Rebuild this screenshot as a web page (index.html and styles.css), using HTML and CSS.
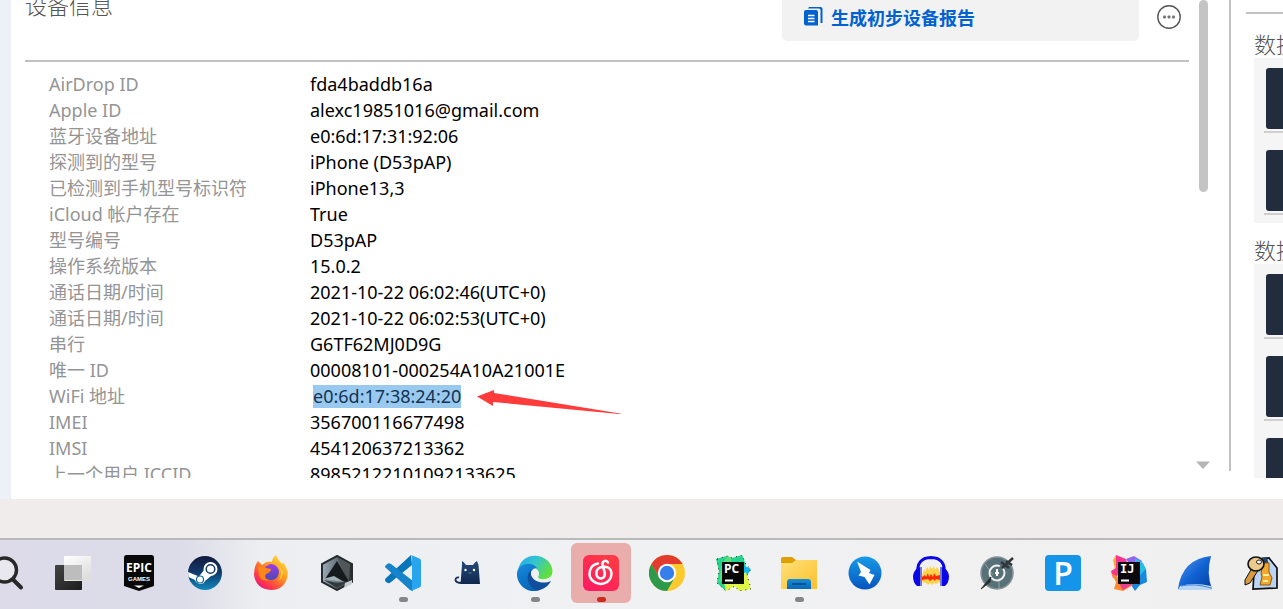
FILE: index.html
```html
<!DOCTYPE html>
<html lang="zh-CN">
<head>
<meta charset="utf-8">
<title>设备信息</title>
<link rel="stylesheet" href="styles.css">
</head>
<body>
<div class="app">
  <div class="edge"></div>
  <main class="device">
    <header class="device-head">
      <h1>设备信息</h1>
      <button class="report" type="button">
        <svg width="19" height="19" viewBox="0 0 19 19" aria-hidden="true"><path d="M5 0H16.500Q18.500 0 18.500 2V16H16.500V3Q16.500 1.500 15 1.500H4Z" fill="#0062d1"/><path d="M2 3H12Q14 3 14 5V18.500H2Q0 18.500 0 16.500V5Q0 3 2 3Z" fill="#0062d1"/><path d="M4 8.500H10.500M4 11.500H10.500M4 14.500H10.500" stroke="#fff" stroke-width="1.300"/></svg>
        <span>生成初步设备报告</span>
      </button>
      <button class="more" type="button" aria-label="更多">
        <svg width="24" height="24" viewBox="0 0 24 24" aria-hidden="true"><circle cx="12" cy="12" r="11.200" fill="#fff" stroke="#555" stroke-width="1.400"/><g fill="#777"><rect x="6" y="10.500" width="3" height="3" rx="1"/><rect x="10.500" y="10.500" width="3" height="3" rx="1"/><rect x="15" y="10.500" width="3" height="3" rx="1"/></g></svg>
      </button>
    </header>
    <div class="details">
      <table>
        <tr><th scope="row">AirDrop ID</th><td>fda4baddb16a</td></tr>
        <tr><th scope="row">Apple ID</th><td>alexc19851016@gmail.com</td></tr>
        <tr><th scope="row">蓝牙设备地址</th><td>e0:6d:17:31:92:06</td></tr>
        <tr><th scope="row">探测到的型号</th><td>iPhone (D53pAP)</td></tr>
        <tr><th scope="row">已检测到手机型号标识符</th><td>iPhone13,3</td></tr>
        <tr><th scope="row">iCloud 帐户存在</th><td>True</td></tr>
        <tr><th scope="row">型号编号</th><td>D53pAP</td></tr>
        <tr><th scope="row">操作系统版本</th><td>15.0.2</td></tr>
        <tr><th scope="row">通话日期/时间</th><td>2021-10-22 06:02:46(UTC+0)</td></tr>
        <tr><th scope="row">通话日期/时间</th><td>2021-10-22 06:02:53(UTC+0)</td></tr>
        <tr><th scope="row">串行</th><td>G6TF62MJ0D9G</td></tr>
        <tr><th scope="row">唯一 ID</th><td>00008101-000254A10A21001E</td></tr>
        <tr><th scope="row">WiFi 地址</th><td><div class="picked"><mark>e0:6d:17:38:24:20</mark><svg width="146" height="26" viewBox="0 0 146 26" aria-hidden="true"><path d="M0 8.500 17 2V5L143 25.500Q145 26 142 26L16 14V18Z" fill="#ff3b3b"/></svg></div></td></tr>
        <tr><th scope="row">IMEI</th><td>356700116677498</td></tr>
        <tr><th scope="row">IMSI</th><td>454120637213362</td></tr>
        <tr><th scope="row">上一个用户 ICCID</th><td>89852122101092133625</td></tr>
      </table>
    </div>
  </main>
  <div class="scroll" aria-hidden="true"><div class="thumb"></div><svg width="14" height="8" viewBox="0 0 14 8"><path d="M0 0.500H14L7 8Z" fill="#b5b5b5"/></svg></div>
  <aside class="side">
    <section><h2>数据</h2><ul><li><div class="card"></div></li><li><div class="card"></div></li></ul></section>
    <section><h2>数据</h2><ul><li><div class="card"></div></li><li><div class="card"></div></li><li><div class="card"></div></li></ul></section>
  </aside>
</div>

<nav class="taskbar" aria-label="任务栏">
  <button type="button" aria-label="搜索"><svg viewBox="0 0 36 36"><circle cx="15.500" cy="15" r="12" fill="#e9e8ee" stroke="#282828" stroke-width="3.400"/><path d="M24 24.500 32 32.500" stroke="#282828" stroke-width="4" stroke-linecap="round"/></svg></button>
  <button type="button" aria-label="任务视图"><svg viewBox="0 0 36 36"><defs><linearGradient id="tv" x2="1" y2="1"><stop stop-color="#454545"/><stop offset="1" stop-color="#1c1c1c"/></linearGradient><linearGradient id="tw" x2="0.600" y2="1"><stop stop-color="#fff"/><stop offset="1" stop-color="#dededf"/></linearGradient></defs><rect y="10" width="27" height="25" rx="1" fill="url(#tv)"/><rect x="9" y="1" width="27" height="25" rx="1" fill="url(#tw)"/><path d="M9 10H27V25H9Z" fill="#bdbdbe"/></svg></button>
  <button type="button" aria-label="Epic Games"><svg viewBox="0 0 36 36"><path d="M5 0H31Q33 0 33 2.500V31L18 36 3 31V2.500Q3 0 5 0Z" fill="#080808"/><text x="18" y="17" class="epic">EPIC</text><text x="18" y="26" class="games">GAMES</text><path d="M13 30.500H23L18 33Z" fill="#fff"/></svg></button>
  <button type="button" aria-label="Steam"><svg viewBox="0 0 36 36"><defs><linearGradient id="st" x2="0" y2="1"><stop stop-color="#14183d"/><stop offset="0.500" stop-color="#103c6c"/><stop offset="1" stop-color="#1288bd"/></linearGradient></defs><circle cx="18" cy="18" r="17" fill="url(#st)"/><path d="M1 17 12 21.500 17 15 24 21 18 26Q17 29 13 29 9 28 8 25L1.500 22Z" fill="#fff"/><circle cx="23.500" cy="14" r="7" fill="#fff"/><circle cx="23.500" cy="14" r="4.300" fill="none" stroke="#153e6c" stroke-width="1.500"/><circle cx="13" cy="24.500" r="3.500" fill="none" stroke="#17669b" stroke-width="1.200"/></svg></button>
  <button type="button" aria-label="Firefox"><svg viewBox="0 0 36 36"><defs><linearGradient id="ff" x1="1" x2="0.200" y2="1"><stop stop-color="#fff44f"/><stop offset="0.450" stop-color="#ff9b1e"/><stop offset="0.800" stop-color="#ff3847"/><stop offset="1" stop-color="#e31587"/></linearGradient><linearGradient id="fp" x2="0" y2="1"><stop stop-color="#a13be9"/><stop offset="1" stop-color="#494ab5"/></linearGradient></defs><path d="M5 6 9 10Q14 5 19 7 19 3 23 0 25 5 29 9L30 7Q36 15 34.500 22 31 35 18 35 3 34 1 20 1 11 5 6Z" fill="url(#ff)"/><path d="M17 9Q25 9 26 17 25 25 18 25 11 25 11 18L12 12Z" fill="url(#fp)"/><path d="M5 12Q11 10 13 13L18 14Q18 17 13 19 10 24 16 25 9 27 6 21Z" fill="#ff861b"/><path d="M26 12Q31 19 25 26 29 24 30 17Z" fill="#ffd93b"/></svg></button>
  <button type="button" aria-label="立方体"><svg viewBox="0 0 36 36"><defs><linearGradient id="cu" x2="1"><stop stop-color="#9cacb7"/><stop offset="0.500" stop-color="#65727b"/><stop offset="1" stop-color="#272b2e"/></linearGradient></defs><path d="M18 1 33 9V27L18 35 3 27V9Z" fill="url(#cu)" stroke="#262b2e" stroke-width="2"/><path d="M18 2 31 9 30 26Z" fill="#50575b"/><path d="M18 6 30 27 6 24Z" fill="#171a1d"/><path d="M5 25 18 28 28 27 18 33Z" fill="#31383c"/><path d="M4 24 15 21 25 27Z" fill="#a5b1b8"/><path d="M26 28 33 25V29L25 33Z" fill="#c8cbcd"/></svg></button>
  <button class="open" type="button" aria-label="Visual Studio Code"><svg viewBox="0 0 36 36"><path d="M26 0 1 23Q-1 25 1 27L3 28Q4 29 6 27L27 10Z" fill="#0875b9"/><path d="M1 10 3 8.500Q4 8 6 9L28 26V36L25 35 1 13Q-1 12 1 10Z" fill="#1683cb"/><path d="M26 0 34.500 3.500Q36 4 36 6V30Q36 32 34.500 32.500L26 36Q27 35 27 33V3Q27 1 26 0Z" fill="#29a4ef"/></svg></button>
  <button type="button" aria-label="Clash"><svg viewBox="0 0 36 36"><defs><linearGradient id="ct" x2="0" y2="1"><stop stop-color="#244a79"/><stop offset="1" stop-color="#11284e"/></linearGradient></defs><path d="M11 6Q13 7 15 10H22Q24 7 26 6L27.500 10 29 29H9.500L11 10Z" fill="url(#ct)"/><path d="M11 28Q5 28 4.500 25 4.500 22 8 22.500" fill="none" stroke="#142d55" stroke-width="1.800"/><circle cx="14.500" cy="15" r="1.200" fill="#fff"/><circle cx="23" cy="15" r="1.200" fill="#fff"/><path d="M18 17.500 19 18.500 20 17.500" stroke="#8fa6c1" fill="none"/></svg></button>
  <button class="open" type="button" aria-label="Microsoft Edge"><svg viewBox="0 0 36 36"><defs><linearGradient id="eg" x2="1" y2="0.500"><stop stop-color="#21a9e9"/><stop offset="0.500" stop-color="#33c5d0"/><stop offset="1" stop-color="#61df3d"/></linearGradient><linearGradient id="eb" x2="0.500" y2="1"><stop stop-color="#168be1"/><stop offset="1" stop-color="#0865b5"/></linearGradient></defs><path d="M1 15C4-1 22-3 31 6 36 11 37 19 33 22 29 25 22 25 21 22 23 19 22 15 18 13 12 8 3 11 1 15Z" fill="url(#eg)"/><path d="M0 18C1 9 14 5 20 13 15 13 13 18 13 22L23 35C9 40-1 28 0 18Z" fill="url(#eb)"/><path d="M14 15C8 20 10 32 20 35.500 27 35 32 30 34 26 27 29 17 28 14 20Z" fill="#104f9b"/></svg></button>
  <button class="open active" type="button" aria-label="网易云音乐"><svg viewBox="0 0 36 36"><defs><linearGradient id="ne" x1="0" y1="1" x2="0.600" y2="0"><stop stop-color="#ff1764"/><stop offset="1" stop-color="#ff3945"/></linearGradient></defs><rect width="36" height="36" rx="6" fill="url(#ne)"/><path d="M15 8.500C6 10 4 21 10 26 17 32 28 28 28.500 19 28.500 12 22 10.500 17 12.500 12 15 12 23 18 23.500 23 23 22 18 21 15L19.500 9.500C19 6 23 4.500 25 7.500" fill="none" stroke="#fff" stroke-width="2.500" stroke-linecap="round"/></svg></button>
  <button type="button" aria-label="Google Chrome"><svg viewBox="0 0 36 36"><circle cx="18" cy="18" r="18" fill="#fdca2d"/><path d="M2.400 9A18 18 0 0 1 33.600 9H18L10.200 22.500Z" fill="#e33b2e"/><path d="M2.400 9A18 18 0 0 0 18 36L25.800 22.500 10.200 22.500Z" fill="#2c994b"/><circle cx="18" cy="18" r="9.200" fill="#fff"/><circle cx="18" cy="18" r="7.200" fill="#367eeb"/></svg></button>
  <button type="button" aria-label="PyCharm"><svg viewBox="0 0 36 36"><path d="M1 4 12 1 17 3 27 0 31 10 20 24 10 35 2 28 4 16Z" fill="#23d58a"/><path d="M12 1 17 3 12 20 4 28 6 12Z" fill="#57df7a"/><path d="M28 10 36 14 31 22H24Z" fill="#12b8e8"/><path d="M31 17 36 34 24 36 20 31 11 36 9 28 20 24Z" fill="#e0f447"/><path d="M2 4 12 1 17 3 27 0 31 10 36 14 32 20 36 34 24 36 20 31 11 36 2 28 4 16Z" fill="none" stroke="#172d24" stroke-dasharray="1 4"/><rect x="7" y="7" width="22" height="22" fill="#060806"/><text x="9" y="18" class="ide">PC</text><path d="M10 25.500H18" stroke="#fff" stroke-width="2"/></svg></button>
  <button class="open" type="button" aria-label="文件资源管理器"><svg viewBox="0 0 36 36"><defs><linearGradient id="fo" x2="1" y2="1"><stop stop-color="#ffe17a"/><stop offset="1" stop-color="#fbc02c"/></linearGradient><linearGradient id="fb" x2="0" y2="1"><stop stop-color="#198dd7"/><stop offset="1" stop-color="#0869b8"/></linearGradient></defs><path d="M0 4Q0 2 2 2H11L15 5H34Q36 5 36 7V16H0Z" fill="#dda000"/><path d="M0 8H11L15 5H36V34H0Z" fill="url(#fo)"/><path d="M6 34V27Q6 24 9 24H27Q30 24 30 27V34Z" fill="url(#fb)"/><path d="M11 29H25" stroke="#064f91" stroke-width="1.800"/></svg></button>
  <button type="button" aria-label="迅雷"><svg viewBox="0 0 36 36"><defs><linearGradient id="bo" x2="0" y2="1"><stop stop-color="#179be8"/><stop offset="1" stop-color="#0754bd"/></linearGradient></defs><circle cx="18" cy="18" r="16.500" fill="url(#bo)"/><path d="M10 6.500 23.500 15 22 18 27.500 20 22.500 29.500 17.500 22 11.500 20.500 14 17Z" fill="#fff"/></svg></button>
  <button type="button" aria-label="Audacity"><svg viewBox="0 0 36 36"><path d="M5 19Q3 3 18 2.500 33 3 31 19" fill="none" stroke="#0906e8" stroke-width="3"/><path d="M9 21 11 14 12 17 14 12 16 15 17 11 19 14 21 11 22 15 24 12 27 17V27L23 29 21 28 19 30 17 28 15 30 13 28 9 27Z" fill="#ffd24b"/><path d="M9 22 12 20 13 22 15 18 16 22 18 19 20 22 21 18 23 21 27 20V25L23 24 22 26 20 24 17 26 15 24 9 25Z" fill="#ff2905"/><path d="M7 12V31H4Q0 28 0 21 1 14 7 12ZM29 12V31H32Q36 28 36 21 35 14 29 12Z" fill="#0906e8"/><path d="M8 12V31M28 12V31" stroke="#777ac8" stroke-width="2"/></svg></button>
  <button type="button" aria-label="密钥工具"><svg viewBox="0 0 36 36"><circle cx="18" cy="18" r="16" fill="#587078" stroke="#859397" stroke-width="1.500"/><path d="M6 9 14 20M20 23 20 34" stroke="#91a1a5"/><circle cx="18" cy="18" r="7.500" fill="none" stroke="#edf1f2" stroke-width="2" stroke-dasharray="38 4"/><path d="M18 14V21M16 18H20" stroke="#fff" stroke-width="2"/><path d="M2 34 12 22 11 27Z" fill="#292e31" stroke="#292e31"/><path d="M23 13 34 3M22 7 30 13M27 6 33 10" stroke="#30363a" stroke-width="2.500"/></svg></button>
  <button type="button" aria-label="P"><svg viewBox="0 0 36 36"><rect width="36" height="36" rx="4" fill="#1595ea"/><text x="18" y="30" class="big">P</text></svg></button>
  <button type="button" aria-label="IntelliJ IDEA"><svg viewBox="0 0 36 36"><path d="M2 5 5 0 11 5 4 15Z" fill="#ffac33"/><path d="M5 0 15 4 18 14 2 23 0 16 5 13Z" fill="#f4368e"/><path d="M15 4 23 1 31 6 24 18Z" fill="#9067e9"/><path d="M24 3 32 8 35 14 34 28 24 25Z" fill="#24bde8"/><path d="M35 14 36 27 29 30 24 36 20 30Z" fill="#1688df"/><path d="M0 18 14 26 22 30 12 36 3 34 5 27Z" fill="#ff8a2d"/><path d="M7 27 22 29 12 35Z" fill="#ed408c"/><rect x="7" y="7" width="22" height="22" fill="#0b080e"/><text x="9" y="18" class="ide mono">IJ</text><path d="M10 25.500H18" stroke="#fff" stroke-width="2"/></svg></button>
  <button type="button" aria-label="Wireshark"><svg viewBox="0 0 36 36"><defs><linearGradient id="ws" x2="1" y2="1"><stop stop-color="#549aec"/><stop offset="0.500" stop-color="#1263d4"/><stop offset="1" stop-color="#063f9e"/></linearGradient></defs><path d="M1 34Q5 4 34 1 29 19 35 34Z" fill="url(#ws)"/><path d="M3 31Q17 27 34 31L35 35H1Z" fill="#b7d5f5"/><path d="M4 31Q18 28 34 33" fill="none" stroke="#4a86d5"/></svg></button>
  <button type="button" aria-label="密钥管理"><svg viewBox="0 0 36 36"><path d="M14 4 26 3 34 13V33L10 34 11 17Z" fill="#b9d4f6" stroke="#111" stroke-width="1.700"/><path d="M17 3 24 2 26 12 19 13Z" fill="#263f68"/><path d="M20 8H26V17L29 23 27 30H17L19 22 18 18Z" fill="#f3a82d" stroke="#8a5a0a"/><path d="M20 20H26M20 26H25" stroke="#fff0a1" stroke-width="2"/><path d="M9 13 2 25V30L7 28 16 14Z" fill="#d99b40" stroke="#111"/><ellipse cx="13" cy="9" rx="8" ry="7" fill="#edca8b" stroke="#111" stroke-width="1.600"/><ellipse cx="16" cy="7" rx="2.500" ry="2" fill="#fff" stroke="#222"/></svg></button>
</nav>
</body>
</html>
```
FILE: styles.css
```css
* { box-sizing: border-box; }

body {
  margin: 0;
  height: 100vh;
  display: flex;
  flex-direction: column;
  overflow: hidden;
  background: #f0eceb;
  font-family: "Noto Sans", "Noto Sans CJK SC", sans-serif;
  font-size: 18px;
}

button {
  border: 0;
  padding: 0;
  background: none;
  font: inherit;
}

svg { display: block; flex: none; }

h1, h2 {
  margin: 0;
  color: #555;
  font-family: "Noto Sans CJK SC", sans-serif;
  font-size: 22px;
  font-weight: 300;
  white-space: nowrap;
}

.app {
  flex: 1;
  min-height: 0;
  display: flex;
  margin-bottom: 39px;
  background: #fff;
}

.edge { width: 11px; background: #edf0f6; }

.device {
  flex: 1;
  min-width: 0;
  display: flex;
  flex-direction: column;
  margin: 0 10px 21px 14px;
}

.device-head {
  display: flex;
  align-items: flex-start;
  gap: 18px;
  padding: 0 8px 19px 0;
  border-bottom: 2px solid #c1c1c1;
}

h1 { margin-right: auto; line-height: 8px; }

.report {
  width: 357px;
  height: 41px;
  display: flex;
  align-items: center;
  gap: 8px;
  padding: 0 22px 8px;
  border-radius: 0 0 5px 5px;
  background: #f2f2f2;
  color: #0062d1;
  font-weight: 700;
}

.more { margin-top: 5px; }

.details {
  flex: 1;
  min-height: 0;
  overflow: hidden;
  padding: 9px 0 0 24px;
}

table { border-collapse: collapse; white-space: nowrap; }

th, td {
  height: 26px;
  padding: 0;
  line-height: 26px;
  text-align: left;
  font-weight: 400;
}

th { min-width: 261px; color: #949494; }
td { color: #000; }

.picked {
  height: 26px;
  display: flex;
  align-items: center;
  gap: 16px;
  padding-left: 3px;
}

mark {
  background: #99c9ef;
  color: #123453;
  line-height: 23px;
}

.picked svg { align-self: flex-start; margin: 5px 0 -5px; }

.scroll {
  width: 32px;
  display: flex;
  flex-direction: column;
  justify-content: space-between;
  margin-bottom: 28px;
  border-right: 2px solid #c1c1c1;
}

.thumb {
  width: 9px;
  height: 192px;
  border-radius: 5px;
  background: #c4c4c4;
}

.scroll svg { margin: 0 0 2px -3px; }

.side {
  width: 52px;
  overflow: hidden;
  margin-bottom: 21px;
  padding: 12px 0 0 15px;
}

.side::before {
  content: "";
  display: block;
  height: 2px;
  margin-bottom: 14px;
  background: #c1c1c1;
}

section { margin: 0 0 11px 8px; }

h2 { line-height: 30px; overflow: hidden; }

ul {
  margin: 0;
  padding: 10px 0 8px 10px;
  list-style: none;
  background: #f5f5f5;
}

li { padding: 0 0 2px 2px; border-bottom: 2px solid #cfcfcf; }
li + li { margin-top: 17px; }

.card {
  height: 61px;
  border-radius: 3px 0 0 3px;
  background: #212c3d;
}

.taskbar {
  display: flex;
  gap: 6px;
  padding: 3px 0 6px;
  border-top: 2px solid #b9b9bc;
  background: linear-gradient(90deg, #dddbe9 0, #dcdbe8 180px, #edeef1 260px, #f0f1f3 600px, #f1f0f0 100%);
}

.taskbar button {
  position: relative;
  flex: none;
  width: 60px;
  height: 60px;
  display: grid;
  place-items: center;
  border-radius: 6px;
}

.taskbar button:first-child { margin-left: -23px; }
.taskbar svg { width: 36px; height: 36px; }

.open::after {
  content: "";
  position: absolute;
  bottom: 1px;
  left: 26px;
  width: 9px;
  height: 5px;
  border-radius: 3px;
  background: #858585;
}

.taskbar .active { background: #e9adab; }
.active::after { background: #c92b20; }

.taskbar text { fill: #fff; font-weight: 700; }
.epic { font-family: "Liberation Sans Narrow", "Open Sans", sans-serif; font-size: 12px; text-anchor: middle; }
.games { font-family: "Liberation Sans", sans-serif; font-size: 6px; text-anchor: middle; }
.ide { font-family: "Open Sans", sans-serif; font-size: 12px; }
.mono { font-family: "DejaVu Sans Mono", monospace; }
.taskbar .big { font-family: "Open Sans", sans-serif; font-size: 32px; font-weight: 600; text-anchor: middle; }
```
